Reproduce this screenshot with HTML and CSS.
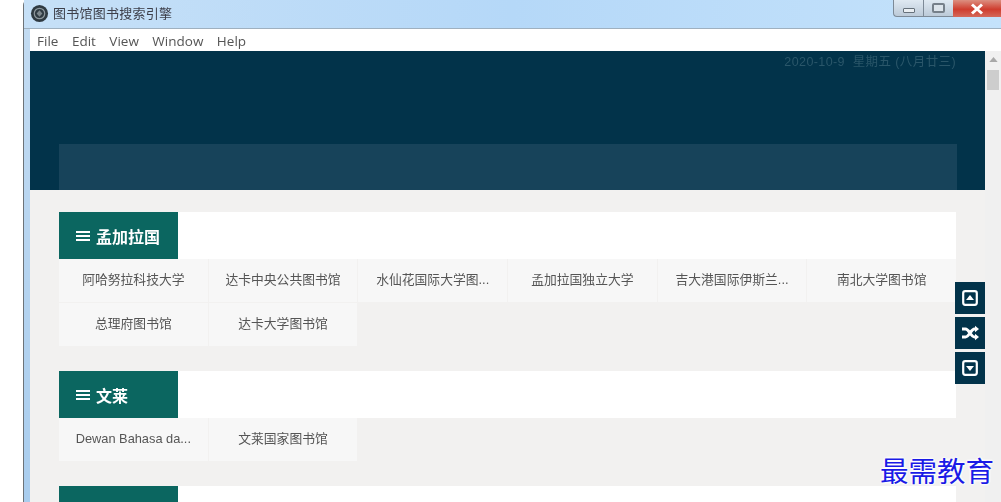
FILE: index.html
```html
<!DOCTYPE html>
<html lang="zh">
<head>
<meta charset="utf-8">
<title>图书馆图书搜索引擎</title>
<link rel="stylesheet" href="styles.css">
</head>
<body>
<div class="window">
  <header class="titlebar">
    <svg class="app-icon" viewBox="0 0 20 20"><circle cx="10" cy="10" r="9" fill="#2f3a42"/><circle cx="10" cy="10" r="5.5" fill="none" stroke="#8d979d" stroke-width="1.3"/><path d="M10 6.5 13 10 10 13.5 7 10Z" fill="#7d878d"/></svg>
    <span class="app-title">图书馆图书搜索引擎</span>
    <div class="controls">
      <div class="ctl"><span class="glyph-min"></span></div>
      <div class="ctl"><span class="glyph-max"></span></div>
      <div class="ctl close">
        <svg viewBox="0 0 14 12" width="14" height="12"><path d="M2 1.5 12 10.5M12 1.5 2 10.5" stroke="#fff" stroke-width="3" fill="none"/></svg>
      </div>
    </div>
  </header>
  <div class="client">
    <nav class="menubar">
      <span>File</span><span>Edit</span><span>View</span><span>Window</span><span>Help</span>
    </nav>
    <div class="viewport">
      <main class="page">
        <section class="hero">
          <div class="date">2020-10-9&nbsp; 星期五 (八月廿三)</div>
          <div class="searchband"></div>
        </section>
        <div class="content">
          <section class="group">
            <div class="group-head"><h2 class="tab"><span class="burger"><i></i><i></i><i></i></span>孟加拉国</h2></div>
            <ul class="items">
              <li>阿哈努拉科技大学</li>
              <li>达卡中央公共图书馆</li>
              <li>水仙花国际大学图...</li>
              <li>孟加拉国独立大学</li>
              <li>吉大港国际伊斯兰...</li>
              <li>南北大学图书馆</li>
              <li>总理府图书馆</li>
              <li>达卡大学图书馆</li>
            </ul>
          </section>
          <section class="group">
            <div class="group-head"><h2 class="tab"><span class="burger"><i></i><i></i><i></i></span>文莱</h2></div>
            <ul class="items">
              <li>Dewan Bahasa da...</li>
              <li>文莱国家图书馆</li>
            </ul>
          </section>
          <section class="group">
            <div class="group-head"><h2 class="tab"><span class="burger"><i></i><i></i><i></i></span>柬埔寨</h2></div>
          </section>
        </div>
      </main>
      <aside class="scrollbar">
        <svg class="arrow" viewBox="0 0 10 6" width="9" height="5"><path d="M5 0 10 6H0Z" fill="#a8a8a8"/></svg>
        <div class="thumb"></div>
      </aside>
      <div class="floaters">
        <button class="fbtn"><svg viewBox="0 0 16 16" width="16" height="16"><rect x="1.2" y="1.2" width="13.6" height="13.6" rx="2" fill="none" stroke="#fff" stroke-width="2.2"/><path d="M8 5 12 10H4Z" fill="#fff"/></svg></button>
        <button class="fbtn"><svg viewBox="0 0 18 16" width="18" height="16"><path d="M1 4H4.5C8 4 10 12 13.5 12H15M1 12H4.5C8 12 10 4 13.5 4H15" fill="none" stroke="#fff" stroke-width="3"/><path d="M14 0.8 18 4 14 7.2ZM14 8.8 18 12 14 15.2Z" fill="#fff"/></svg></button>
        <button class="fbtn"><svg viewBox="0 0 16 16" width="16" height="16"><rect x="1.2" y="1.2" width="13.6" height="13.6" rx="2" fill="none" stroke="#fff" stroke-width="2.2"/><path d="M8 11 4 6H12Z" fill="#fff"/></svg></button>
      </div>
    </div>
  </div>
</div>
<div class="watermark">最需教育</div>
</body>
</html>
```
FILE: styles.css
```css
* { box-sizing: border-box; }
html, body { margin: 0; height: 100%; }
body {
  background: #fff;
  overflow: hidden;
  font-family: "Liberation Sans", "Noto Sans CJK SC", sans-serif;
  position: relative;
}
.window {
  margin-left: 23px;
  height: 502px;
  border-left: 1px solid #6d7378;
  border-radius: 5px 0 0 0;
  background: linear-gradient(#c4dcf2, #a9cdee);
  display: flex;
  flex-direction: column;
  filter: blur(0.6px);
}
.titlebar {
  height: 29px;
  flex: none;
  display: flex;
  align-items: flex-start;
  padding-left: 6px;
  border-bottom: 1px solid #9fb0bf;
  background: linear-gradient(90deg, #c6e0f7, #b5d8f8 50%, #c4e2fb);
}
.app-icon { width: 19px; height: 19px; margin-top: 4px; }
.app-title { margin: 4px 0 0 4px; font-size: 13px; line-height: 19px; color: #3d3f4a; letter-spacing: 0.25px; }
.controls { margin-left: auto; display: flex; height: 17px; }
.ctl {
  width: 30px;
  display: flex;
  align-items: center;
  justify-content: center;
  background: linear-gradient(#dfe9f2, #bccad8);
  border: 1px solid #7d8a97;
  border-top: 0;
  border-right: 0;
}
.ctl:first-child { border-radius: 0 0 0 4px; }
.glyph-min { width: 12px; height: 5px; margin-top: 4px; background: #e9eef2; border: 1px solid #66717b; border-radius: 1px; }
.glyph-max { width: 13px; height: 10px; background: #dce4eb; border: 2px solid #76808a; border-radius: 2px; }
.ctl.close {
  width: 48px;
  border: 0;
  background: linear-gradient(#dc8f80, #cf3d2e 55%, #d4695a);
}
.client { flex: 1; min-height: 0; margin-left: 6px; background: #fff; display: flex; flex-direction: column; }
.menubar {
  height: 22px;
  flex: none;
  display: flex;
  gap: 13.5px;
  padding: 2px 0 0 7px;
  align-items: center;
  font-family: "Open Sans", "Noto Sans", sans-serif;
  font-size: 13.5px;
  color: #555;
  background: #fff;
}
.viewport { flex: 1; min-height: 0; display: flex; position: relative; overflow: hidden; }
.page { width: 955px; flex: none; background: #f2f1f0; overflow: hidden; }
.hero {
  height: 139px;
  background: #02334a;
  display: flex;
  flex-direction: column;
  padding: 0 28px 0 29px;
}
.date {
  height: 93px;
  padding: 2px 1px 0 0;
  text-align: right;
  font-size: 12.5px;
  line-height: 18px;
  color: #2a5669;
  letter-spacing: 0.4px;
}
.searchband { flex: 1; background: #17435a; }
.content { padding: 22px 29px 0; }
.group { margin-bottom: 25px; }
.group-head { height: 47px; background: #fff; }
.tab {
  width: 119px;
  height: 47px;
  margin: 0;
  padding-left: 17px;
  display: flex;
  align-items: center;
  gap: 6px;
  background: #0b6660;
  color: #fff;
  font-size: 16px;
  font-weight: 700;
}
.burger { display: flex; flex-direction: column; gap: 2px; width: 14px; }
.burger i { display: block; height: 2px; background: #fff; }
.items {
  list-style: none;
  margin: 0;
  padding: 0;
  display: grid;
  grid-template-columns: repeat(6, 1fr);
  gap: 1px;
}
.items li {
  height: 43px;
  padding: 0 8px;
  background: #f7f7f7;
  text-align: center;
  font-size: 12.8px;
  line-height: 41px;
  color: #555;
  white-space: nowrap;
  overflow: hidden;
}
.scrollbar {
  flex: 1;
  background: #f0f0f0;
  display: flex;
  flex-direction: column;
  align-items: center;
  padding-top: 6px;
}
.arrow { display: block; }
.thumb { width: 12px; height: 20px; margin-top: 8px; background: #cdcdcd; }
.floaters {
  position: absolute;
  left: 925px;
  top: 231px;
  display: flex;
  flex-direction: column;
  gap: 3px;
}
.fbtn {
  width: 30px;
  height: 32px;
  padding: 0;
  border: 0;
  background: #02334a;
  display: flex;
  align-items: center;
  justify-content: center;
}
.watermark {
  position: absolute;
  left: 880px;
  top: 452px;
  font-family: "Noto Sans CJK SC", serif;
  font-size: 28.5px;
  line-height: 36px;
  color: #1a1ae6;
  white-space: nowrap;
  text-shadow: 0 0 3px #fff, 0 0 3px #fff, 0 0 3px #fff, 0 0 3px #fff;
}
```
